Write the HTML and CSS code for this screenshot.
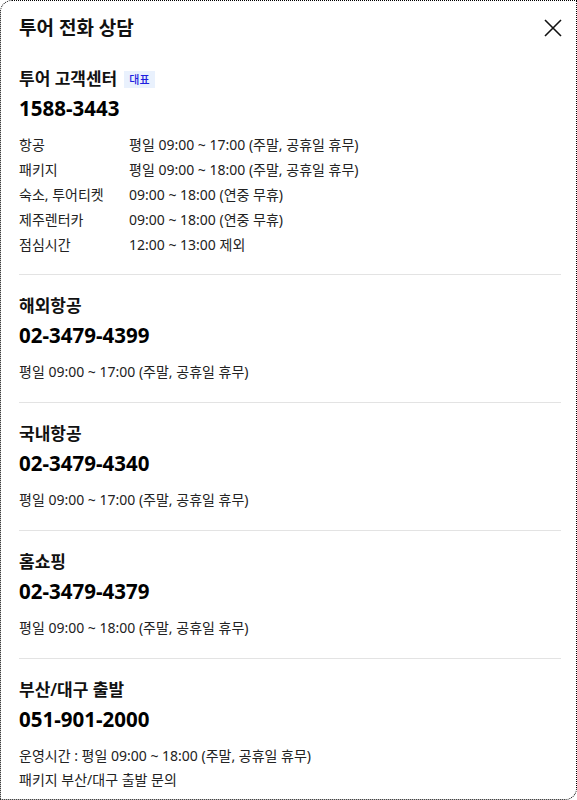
FILE: index.html
```html
<!DOCTYPE html>
<html lang="ko">
<head>
  <meta charset="UTF-8">
  <meta name="viewport" content="width=device-width, initial-scale=1.0">
  <title>투어 전화 상담</title>
  <link rel="stylesheet" href="styles.css">
</head>
<body>
  <div class="dialog">
    <div class="dialog-header">
      <h1>투어 전화 상담</h1>
      <button class="close" aria-label="닫기">
        <svg width="20" height="20" viewBox="0 0 20 20">
          <path d="M2 2 L18 18 M18 2 L2 18" stroke="#111" stroke-width="1.6" fill="none"/>
        </svg>
      </button>
    </div>

    <div class="section first">
      <h2>투어 고객센터 <span class="badge">대표</span></h2>
      <div class="phone">1588-3443</div>
      <table class="hours">
        <tr><td>항공</td><td>평일 09:00 ~ 17:00 (주말, 공휴일 휴무)</td></tr>
        <tr><td>패키지</td><td>평일 09:00 ~ 18:00 (주말, 공휴일 휴무)</td></tr>
        <tr><td>숙소, 투어티켓</td><td>09:00 ~ 18:00 (연중 무휴)</td></tr>
        <tr><td>제주렌터카</td><td>09:00 ~ 18:00 (연중 무휴)</td></tr>
        <tr><td>점심시간</td><td>12:00 ~ 13:00 제외</td></tr>
      </table>
    </div>

    <div class="section">
      <h2>해외항공</h2>
      <div class="phone">02-3479-4399</div>
      <p class="desc">평일 09:00 ~ 17:00 (주말, 공휴일 휴무)</p>
    </div>

    <div class="section">
      <h2>국내항공</h2>
      <div class="phone">02-3479-4340</div>
      <p class="desc">평일 09:00 ~ 17:00 (주말, 공휴일 휴무)</p>
    </div>

    <div class="section">
      <h2>홈쇼핑</h2>
      <div class="phone">02-3479-4379</div>
      <p class="desc">평일 09:00 ~ 18:00 (주말, 공휴일 휴무)</p>
    </div>

    <div class="section last">
      <h2>부산/대구 출발</h2>
      <div class="phone">051-901-2000</div>
      <p class="desc">운영시간 : 평일 09:00 ~ 18:00 (주말, 공휴일 휴무)</p>
      <p class="desc">패키지 부산/대구 출발 문의</p>
    </div>
  </div>
</body>
</html>
```

FILE: styles.css
```css
* {
  box-sizing: border-box;
}
body {
  margin: 0;
  background: #fff;
  font-family: "Noto Sans", "Noto Sans CJK KR", sans-serif;
  color: #111;
}
.dialog {
  width: 577px;
  height: 800px;
  border: 1px dotted #000;
  border-radius: 12px 0 12px 0;
  padding: 0 15px 0 18px;
  overflow: hidden;
}
.dialog-header {
  display: flex;
  align-items: center;
  justify-content: space-between;
  padding: 14px 0 7px;
}
h1 {
  margin: 0;
  font-size: 19px;
  line-height: 26px;
  font-weight: 700;
}
.close {
  border: none;
  background: none;
  padding: 0;
  width: 20px;
  height: 20px;
  margin-right: -2px;
  cursor: pointer;
}
.section {
  padding: 20px 0 18px;
  border-bottom: 1px solid #e3e3e3;
}
.section.first {
  padding-bottom: 17px;
}
.section.last {
  border-bottom: none;
}
h2 {
  margin: 0;
  font-size: 17px;
  line-height: 22px;
  font-weight: 600;
  display: flex;
  align-items: center;
  gap: 7px;
}
.badge {
  font-size: 11px;
  line-height: 17px;
  padding: 0 5px;
  background: #e9f1fd;
  color: #1f1fe0;
  font-weight: 500;
}
.phone {
  margin-top: 4px;
  font-size: 20.5px;
  line-height: 28px;
  font-weight: 700;
  color: #000;
}
.hours {
  margin-top: 10px;
  border-collapse: collapse;
  font-size: 14px;
  color: #222;
}
.hours td {
  padding: 0;
  height: 25px;
  line-height: 25px;
}
.hours td:first-child {
  width: 110px;
}
.desc {
  margin: 10px 0 0;
  font-size: 14px;
  line-height: 25px;
  color: #222;
}
.desc + .desc {
  margin-top: 0;
  line-height: 24px;
}
```
